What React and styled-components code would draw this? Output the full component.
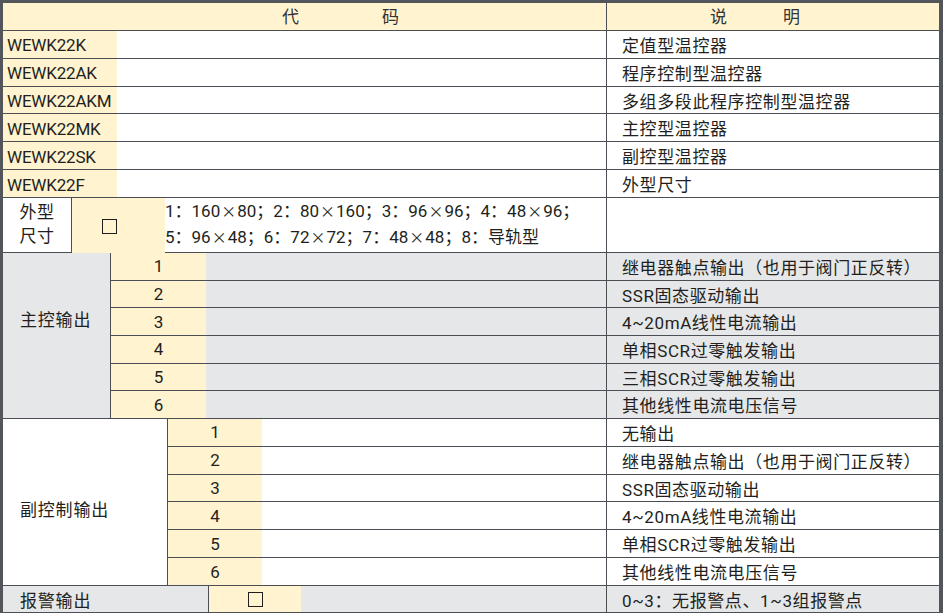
import styled, {createGlobalStyle} from 'styled-components'

const LINE = '#4b4f55'
const FRAME = '#52565b'
const YELLOW = '#fff3d0'
const GRAY = '#e6e7e9'
const INK = '#231f20'

const GlobalStyle = createGlobalStyle`
  body {
    margin: 0;
    background: #fff;
    font-family: Roboto, "Noto Sans CJK SC", sans-serif;
    color: ${INK};
  }
`

const Frame = styled.div`
  width: 943px;
  box-sizing: border-box;
  border-top: 3px solid ${FRAME};
  border-left: 3px solid ${FRAME};
  border-right: 4px solid ${FRAME};
  display: flex;
  flex-direction: column;
`

const HeaderRow = styled.div`
  display: grid;
  grid-template-columns: 604px 1fr;
  height: 28px;
  box-sizing: border-box;
  border-bottom: 1px solid ${LINE};
  background: ${YELLOW};
`

const HeadCell = styled.div`
  display: flex;
  align-items: center;
  padding-left: ${p => p.$pad}px;
  gap: ${p => p.$gap}px;
  font-size: 17px;
  line-height: 20px;
  color: #333;
  border-right: ${p => (p.$divider ? `1px solid ${LINE}` : 'none')};
`

const CodeBlock = styled.div`
  height: 167px;
  display: flex;
  flex-direction: column;
`

const CodeRow = styled.div`
  flex: 1 1 0;
  min-height: 0;
  display: grid;
  grid-template-columns: 114px 1fr 332px;
  border-bottom: 1px solid ${LINE};
`

const CodeCell = styled.div`
  background: ${YELLOW};
  display: flex;
  align-items: center;
  padding: 2px 0 0 4px;
  font-size: 17px;
  line-height: 20px;
  letter-spacing: -0.2px;
`

const Filler = styled.div`
  border-right: 1px solid ${LINE};
`

const Desc = styled.div`
  display: flex;
  align-items: center;
  padding: 3px 0 0 15px;
  font-size: 17px;
  line-height: 20px;
  letter-spacing: 0.6px;
  white-space: nowrap;
  overflow: hidden;
`

const SizeRow = styled.div`
  height: 55px;
  box-sizing: border-box;
  display: grid;
  grid-template-columns: 69px 93px 1fr 332px;
  border-bottom: 1px solid ${LINE};
`

const SizeLabel = styled.div`
  border-right: 1px solid ${LINE};
  display: flex;
  flex-direction: column;
  align-items: center;
  justify-content: center;
  padding-bottom: 4px;
  font-size: 17px;
  line-height: 24px;
  letter-spacing: 0.5px;
`

const BoxCell = styled.div`
  background: ${YELLOW};
  display: flex;
  align-items: center;
  justify-content: ${p => (p.$left ? 'flex-start' : 'center')};
  padding-left: ${p => (p.$left ? 30 : 0)}px;
`

const Box = styled.span`
  width: 13px;
  height: 13px;
  border: 1.5px solid #1f1f1f;
  display: block;
`

const SizeText = styled.div`
  border-right: 1px solid ${LINE};
  display: flex;
  flex-direction: column;
  justify-content: center;
  padding-bottom: 4px;
  font-size: 17px;
  line-height: 25px;
  white-space: nowrap;
`

const Mul = styled.span`
  font-family: "Noto Sans CJK SC", sans-serif;
  font-size: 15px;
  margin: 0 1px;
`

const Section = styled.div`
  height: ${p => p.$h}px;
  box-sizing: border-box;
  display: flex;
  border-bottom: 1px solid ${LINE};
  background: ${p => p.$bg};
`

const Label = styled.div`
  width: ${p => p.$w}px;
  flex: none;
  box-sizing: border-box;
  border-right: 1px solid ${LINE};
  display: flex;
  align-items: ${p => (p.$top != null ? 'flex-start' : 'center')};
  padding: ${p => (p.$top != null ? p.$top : 3)}px 0 0 17px;
  font-size: 17px;
  line-height: 20px;
  letter-spacing: 0.8px;
`

const Rows = styled.div`
  flex: 1;
  min-height: 0;
  display: flex;
  flex-direction: column;
`

const OutRow = styled.div`
  flex: 1 1 0;
  min-height: 0;
  display: grid;
  grid-template-columns: ${p => p.$num}px 1fr 332px;
  border-bottom: ${p => (p.$last ? 'none' : `1px solid ${LINE}`)};
`

const Num = styled.div`
  background: ${YELLOW};
  display: flex;
  align-items: center;
  justify-content: center;
  font-size: 17px;
  line-height: 20px;
`

const codes = [
  ['WEWK22K', '定值型温控器'],
  ['WEWK22AK', '程序控制型温控器'],
  ['WEWK22AKM', '多组多段此程序控制型温控器'],
  ['WEWK22MK', '主控型温控器'],
  ['WEWK22SK', '副控型温控器'],
  ['WEWK22F', '外型尺寸'],
]

const mainOut = [
  '继电器触点输出（也用于阀门正反转）',
  'SSR固态驱动输出',
  '4~20mA线性电流输出',
  '单相SCR过零触发输出',
  '三相SCR过零触发输出',
  '其他线性电流电压信号',
]

const subOut = [
  '无输出',
  '继电器触点输出（也用于阀门正反转）',
  'SSR固态驱动输出',
  '4~20mA线性电流输出',
  '单相SCR过零触发输出',
  '其他线性电流电压信号',
]

function Dim({a, b}) {
  return <>{a}<Mul>×</Mul>{b}</>
}

function OutputSection({label, labelWidth, labelTop, numWidth, height, bg, items}) {
  return (
    <Section $h={height} $bg={bg}>
      <Label $w={labelWidth} $top={labelTop}>{label}</Label>
      <Rows>
        {items.map((d, i) => (
          <OutRow key={i} $num={numWidth} $last={i === items.length - 1}>
            <Num>{i + 1}</Num>
            <Filler/>
            <Desc>{d}</Desc>
          </OutRow>
        ))}
      </Rows>
    </Section>
  )
}

export default function App() {
  return (
    <>
      <GlobalStyle/>
      <Frame>
        <HeaderRow>
          <HeadCell $pad={279} $gap={83} $divider><span>代</span><span>码</span></HeadCell>
          <HeadCell $pad={103} $gap={56}><span>说</span><span>明</span></HeadCell>
        </HeaderRow>

        <CodeBlock>
          {codes.map(([c, d]) => (
            <CodeRow key={c}>
              <CodeCell>{c}</CodeCell>
              <Filler/>
              <Desc>{d}</Desc>
            </CodeRow>
          ))}
        </CodeBlock>

        <SizeRow>
          <SizeLabel><span>外型</span><span>尺寸</span></SizeLabel>
          <BoxCell $left><Box/></BoxCell>
          <SizeText>
            <span>1：<Dim a="160" b="80"/>；2：<Dim a="80" b="160"/>；3：<Dim a="96" b="96"/>；4：<Dim a="48" b="96"/>；</span>
            <span>5：<Dim a="96" b="48"/>；6：<Dim a="72" b="72"/>；7：<Dim a="48" b="48"/>；8：导轨型</span>
          </SizeText>
          <div/>
        </SizeRow>

        <OutputSection label="主控输出" labelWidth={108} labelTop={57} numWidth={95}
                       height={166} bg={GRAY} items={mainOut}/>
        <OutputSection label="副控制输出" labelWidth={165} labelTop={81} numWidth={94}
                       height={167} bg="#fff" items={subOut}/>

        <Section $h={27} $bg={GRAY}>
          <Label $w={206}>报警输出</Label>
          <Rows>
            <OutRow $num={92} $last>
              <BoxCell><Box/></BoxCell>
              <Filler/>
              <Desc>0~3：无报警点、1~3组报警点</Desc>
            </OutRow>
          </Rows>
        </Section>
      </Frame>
    </>
  )
}
